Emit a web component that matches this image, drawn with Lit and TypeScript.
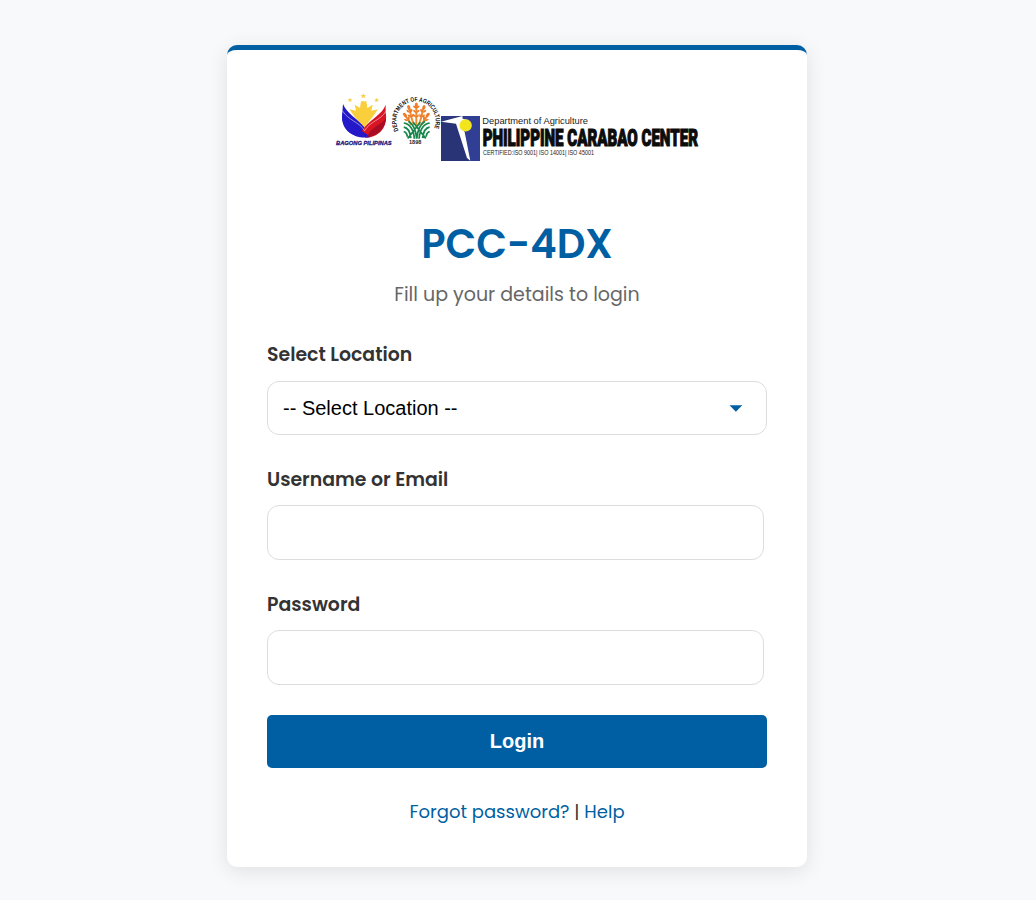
import { LitElement, html, css } from "lit";
import { customElement } from "lit/decorators.js";

@customElement("pcc-logo")
class PccLogo extends LitElement {
  static styles = css`
    :host { display: block; width: 380px; height: 78px; }
    svg { display: block; width: 380px; height: 78px; overflow: visible; }
    .sans { font-family: "Liberation Sans", Arial, sans-serif; }
    .heavy { font-family: Roboto, "Liberation Sans", sans-serif; font-weight: 900; }
    .bold { font-weight: 700; }
    .italic { font-style: italic; }
  `;

  render() {
    return html`
      <svg viewBox="0 0 1140 234" role="img" aria-label="Philippine Carabao Center">
        <!-- Bagong Pilipinas -->
        <g>
          <path fill="#f9cf3c" d="M58 64 78 68 74 50 90 60 93 40 109 40 112 60 128 50 124 68 144 64 128 86 102 120 74 86Z" />
          <g fill="#f7cf4b">
            <path d="m100 16 2 5 6 0-4 4 2 6-6-3-6 3 2-6-4-4 6 0Z" />
            <path d="m60 29 2 5 5 0-4 4 2 5-5-3-5 3 2-5-4-4 5 0Z" />
            <path d="m140 29 2 5 5 0-4 4 2 5-5-3-5 3 2-5-4-4 5 0Z" />
          </g>
          <path fill="#2418c8" d="M39 48C50 76 80 90 103 118L113 146C70 150 29 128 37 72Z" />
          <path fill="#d91523" d="M167 50C157 78 127 90 105 116L93 132 107 149C154 147 174 112 167 72Z" />
          <path fill="#2418c8" d="M36 84C62 118 92 122 122 147 77 156 38 131 36 84Z" />
          <path fill="#a80d23" d="M168 88C157 112 128 111 110 147 142 145 168 122 168 88Z" />
          <path fill="none" stroke="#fff" stroke-width="1.5" d="M37 68C56 98 88 102 104 128 121 99 150 98 168 70" />
        </g>
        <text class="sans bold italic" x="18" y="170" font-size="17" fill="#17137b" stroke="#17137b" stroke-width=".8" textLength="167" lengthAdjust="spacingAndGlyphs">BAGONG PILIPINAS</text>

        <!-- Department of Agriculture -->
        <path id="seal-arc" fill="none" d="M206 127A59 59 0 1 1 310 127" />
        <text class="sans bold" font-size="19" fill="#111"><textPath href="#seal-arc" textLength="236" lengthAdjust="spacingAndGlyphs">DEPARTMENT OF AGRICULTURE</textPath></text>
        <g transform="translate(259 104) scale(1.18 1.1) translate(-258 -105)">
          <g fill="none" stroke="#ed8b32" stroke-width="5">
            <path d="M258 58V112M241 68Q244 90 252 112M275 68Q272 90 264 112M229 86Q239 96 246 112M287 86Q278 96 270 112" />
          </g>
          <g fill="#ed7d2b">
            <ellipse cx="258" cy="57" rx="4" ry="7" />
            <path d="M258 67q-9-2-8-9 7 1 8 9 1-8 8-9 1 7-8 9ZM258 79q-9-2-8-9 7 1 8 9 1-8 8-9 1 7-8 9ZM258 91q-9-2-8-9 7 1 8 9 1-8 8-9 1 7-8 9ZM242 78q-10 0-9-8 7 0 9 8-2-8 5-11 4 8-5 11ZM246 91q-10 0-10-8 8 0 10 8-2-8 5-11 4 8-5 11ZM274 78q10 0 9-8-7 0-9 8 2-8-5-11-4 8 5 11ZM270 91q10 0 10-8-8 0-10 8 2-8-5-11-4 8 5 11ZM239 100q-10 3-13-4 8-3 13 4-6-8-1-13 6 6 1 13ZM277 100q10 3 13-4-8-3-13 4 6-8 1-13-6 6-1 13Z" />
            <ellipse cx="239" cy="64" rx="4" ry="7" transform="rotate(-18 239 64)" />
            <ellipse cx="277" cy="64" rx="4" ry="7" transform="rotate(18 277 64)" />
            <ellipse cx="229" cy="84" rx="4" ry="7" transform="rotate(-38 229 84)" />
            <ellipse cx="287" cy="84" rx="4" ry="7" transform="rotate(38 287 84)" />
          </g>
          <g fill="none" stroke="#16864b" stroke-width="4.5">
            <path d="M226 106Q250 110 253 149M292 106Q268 110 265 149M226 117Q241 119 244 147M292 117Q277 119 274 147M226 129Q234 132 235 143M292 129Q284 132 283 143M238 101Q256 113 259 149 262 113 280 101M250 104 282 148M268 104 236 148" />
          </g>
        </g>
        <text class="sans bold" x="237" y="169" font-size="16" fill="#222" textLength="37" lengthAdjust="spacingAndGlyphs">1898</text>

        <!-- Philippine Carabao Center -->
        <path fill="#293477" d="M333 84H450V219H333Z" />
        <path fill="#303e93" d="M396 84H450V219H420Z" />
        <path fill="#2c3a86" d="M333 84H386L333 98Z" />
        <path fill="#fff" d="M333 101 386 87 397 84 398 92 418 97 399 104 397 116 404 132 421 218 411 210 378 107Z" />
        <circle cx="407" cy="112" r="18.5" fill="#f3e51d" />
        <text class="sans" x="457" y="107" font-size="29" textLength="317" lengthAdjust="spacingAndGlyphs" fill="#222">Department of Agriculture</text>
        <text class="heavy" x="458" y="173" font-size="70" fill="#0c0c0c" stroke="#0c0c0c" stroke-width="3.5" textLength="646" lengthAdjust="spacingAndGlyphs">PHILIPPINE CARABAO CENTER</text>
        <text class="sans" x="459" y="202" font-size="20" fill="#222" textLength="333" lengthAdjust="spacingAndGlyphs">CERTIFIED:ISO 9001| ISO 14001| ISO 45001</text>
      </svg>
    `;
  }
}

@customElement("app-root")
class AppRoot extends LitElement {
  static styles = css`
    :host {
      display: block;
      box-sizing: border-box;
      height: 900px;
      padding: 45px 0 0 227px;
      overflow: hidden;
      background: #f8f9fb;
      font-family: Poppins, Inter, sans-serif;
      color: #333;
    }
    .card {
      box-sizing: border-box;
      width: 580px;
      height: 822px;
      padding: 38px 40px 0;
      border-top: 5px solid #005fa3;
      border-radius: 10px;
      background: #fff;
      box-shadow: 0 4px 20px rgba(0, 0, 0, 0.1);
    }
    .brand { padding-left: 63px; height: 78px; }
    h1 {
      margin: 47px 0 0;
      height: 62px;
      line-height: 62px;
      font-size: 40px;
      font-weight: 600;
      text-align: center;
      color: #005fa3;
      white-space: nowrap;
    }
    .intro {
      margin: 5px 0 0;
      height: 30px;
      line-height: 30px;
      font-size: 19px;
      text-align: center;
      color: #666;
    }
    label {
      display: block;
      height: 28px;
      line-height: 28px;
      font-size: 18.9px;
      font-weight: 600;
    }
    .location { margin-top: 31px; }
    .select + label, input + label { margin-top: 31px; }
    .select {
      box-sizing: border-box;
      display: flex;
      align-items: center;
      justify-content: space-between;
      width: 500px;
      height: 54px;
      margin-top: 12px;
      padding: 0 24px 0 15px;
      border: 1px solid #ddd;
      border-radius: 12px;
      background: #fff;
      font: 20px "Liberation Sans", Arial, sans-serif;
      color: #000;
    }
    .arrow { display: block; width: 13px; height: 7px; }
    input {
      display: block;
      box-sizing: border-box;
      width: 497px;
      height: 55px;
      margin: 11px 0 0;
      padding: 15px;
      border: 1px solid #ddd;
      border-radius: 12px;
      background: #fff;
      font: 20px "Liberation Sans", Arial, sans-serif;
    }
    button {
      display: block;
      width: 500px;
      height: 53px;
      margin: 30px 0 0;
      padding: 0;
      border: 0;
      border-radius: 5px;
      background: #005fa3;
      color: #fff;
      font: bold 20px "Liberation Sans", Arial, sans-serif;
    }
    .links {
      margin-top: 29px;
      height: 30px;
      line-height: 30px;
      font-size: 18px;
      text-align: center;
      white-space: pre;
    }
    .links a { color: #005fa3; text-decoration: none; }
    .bar { color: #333; }
  `;

  render() {
    return html`
      <main class="card">
        <div class="brand"><pcc-logo></pcc-logo></div>
        <h1>PCC-4DX</h1>
        <p class="intro">Fill up your details to login</p>
        <label class="location">Select Location</label>
        <div class="select" role="combobox" tabindex="0">
          <span>-- Select Location --</span>
          <svg class="arrow" viewBox="0 0 13 7"><path fill="#005fa3" d="M.5 .3H13.3L6.9 6.8Z" /></svg>
        </div>
        <label for="user">Username or Email</label>
        <input id="user" type="text" />
        <label for="pass">Password</label>
        <input id="pass" type="password" />
        <button type="button">Login</button>
        <div class="links"><a>Forgot password?</a><span class="bar"> | </span><a>Help</a></div>
      </main>
    `;
  }
}
